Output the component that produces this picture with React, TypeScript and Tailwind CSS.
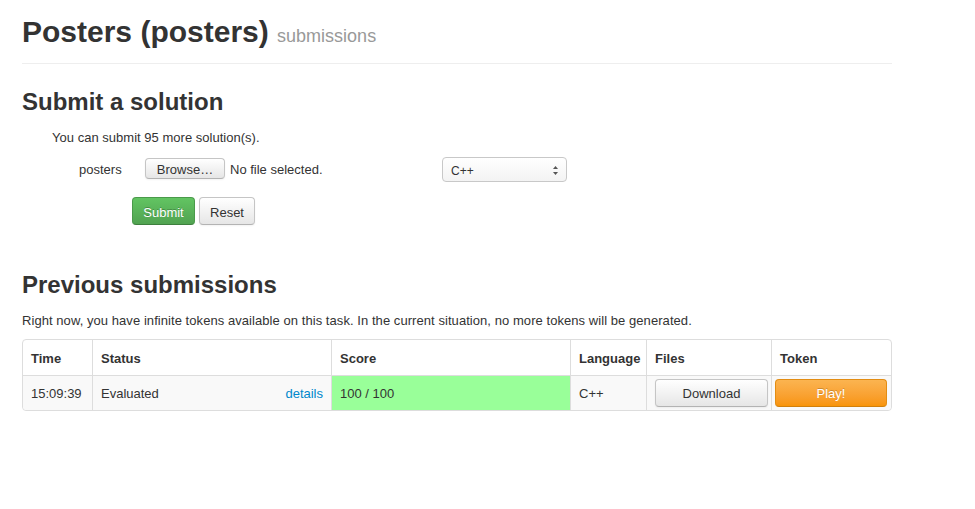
const btnDefault =
  "rounded-[4px] border border-[#c5c5c5] border-b-[#b3b3b3] bg-gradient-to-b from-white to-[#e6e6e6] text-[#333] text-[13px] shadow-[inset_0_1px_0_rgba(255,255,255,0.2),0_1px_2px_rgba(0,0,0,0.05)]";

function SelectBox() {
  return (
    <div className="flex h-[25px] w-[125px] items-center justify-between rounded-[4px] border border-[#c8c8c8] bg-gradient-to-b from-white to-[#f3f3f3] pl-[8px] pr-[7px] pt-[2px] text-[12px] text-[#333]">
      <span>C++</span>
      <svg width="7" height="11" viewBox="0 0 7 11">
        <path d="M3.5 1 L6 4 L1 4 Z" fill="#555" />
        <path d="M3.5 10 L6 7 L1 7 Z" fill="#555" />
      </svg>
    </div>
  );
}

export default function App() {
  return (
    <div className="min-h-[509px] bg-white font-['Liberation_Sans',Arial,sans-serif] text-[#333]">
      <div className="w-[870px] ml-[22px] pt-[12px]">
        {/* page header */}
        <div className="border-b border-[#eee] pb-[11px]">
          <h1 className="h-[40px] text-[30px] font-bold leading-[40px] whitespace-nowrap">
            Posters (posters){" "}
            <span className="text-[18px] font-normal text-[#999]">submissions</span>
          </h1>
        </div>

        <h2 className="mt-[23px] text-[24px] font-bold leading-[30px]">Submit a solution</h2>
        <p className="mt-[12px] pl-[30px] text-[13px] leading-[18px] tracking-[0.02px]">
          You can submit 95 more solution(s).
        </p>

        <div className="mt-[10px] flex h-[25px] items-start text-[13px]">
          <div className="ml-[57px] w-[66px] pt-[4px] leading-[18px]">posters</div>
          <div className="flex w-[297px] items-center">
            <button className={`${btnDefault} h-[21px] w-[80px] pt-px leading-[19px]`}>Browse…</button>
            <span className="ml-[5px] pt-[2px] leading-[21px]">No file selected.</span>
          </div>
          <SelectBox />
        </div>

        <div className="ml-[110px] mt-[15px] flex gap-[4px] text-[13px]">
          <button className="h-[28px] w-[63px] rounded-[4px] border border-[#4a9a4a] border-b-[#3d7f3d] bg-gradient-to-b from-[#62c462] to-[#51a351] pt-[3px] text-white [text-shadow:0_-1px_0_rgba(0,0,0,0.25)]">
            Submit
          </button>
          <button className={`${btnDefault} h-[28px] w-[56px] pt-[3px]`}>Reset</button>
        </div>

        <h2 className="mt-[45px] text-[24px] font-bold leading-[30px]">Previous submissions</h2>
        <p className="mt-[12px] text-[13px] leading-[18px] tracking-[0.06px]">
          Right now, you have infinite tokens available on this task. In the current situation, no more tokens will be generated.
        </p>

        <table className="mt-[9px] w-[870px] table-fixed border-separate border-spacing-0 rounded-[4px] border border-[#ddd] text-[13px]">
          <colgroup>
            <col className="w-[69px]" />
            <col className="w-[239px]" />
            <col className="w-[239px]" />
            <col className="w-[76px]" />
            <col className="w-[125px]" />
            <col />
          </colgroup>
          <thead>
            <tr className="h-[35px] text-left font-bold">
              <th className="px-[8px] pt-[2px] font-bold">Time</th>
              <th className="border-l border-[#ddd] px-[8px] pt-[2px] font-bold">Status</th>
              <th className="border-l border-[#ddd] px-[8px] pt-[2px] font-bold">Score</th>
              <th className="border-l border-[#ddd] px-[8px] pt-[2px] font-bold">Language</th>
              <th className="border-l border-[#ddd] px-[8px] pt-[2px] font-bold">Files</th>
              <th className="border-l border-[#ddd] px-[8px] pt-[2px] font-bold">Token</th>
            </tr>
          </thead>
          <tbody>
            <tr className="h-[34px] bg-[#f9f9f9]">
              <td className="rounded-bl-[4px] border-t border-[#ddd] px-[8px] pt-[2px]">15:09:39</td>
              <td className="border-l border-t border-[#ddd] px-[8px] pt-[2px]">
                <div className="flex justify-between">
                  <span>Evaluated</span>
                  <a className="text-[#0088cc]">details</a>
                </div>
              </td>
              <td className="border-l border-t border-[#ddd] bg-[#99ff99] px-[8px] pt-[2px]">100 / 100</td>
              <td className="border-l border-t border-[#ddd] px-[8px] pt-[2px]">C++</td>
              <td className="border-l border-t border-[#ddd] pl-[8px] py-[3px]">
                <button className={`${btnDefault} h-[28px] w-[113px] pt-[2px]`}>Download</button>
              </td>
              <td className="rounded-br-[4px] border-l border-t border-[#ddd] pl-[3px] py-[3px]">
                <button className="h-[28px] w-[112px] rounded-[4px] border border-[#e38d13] border-b-[#d07f0c] bg-gradient-to-b from-[#fbb450] to-[#f89406] pt-[2px] text-[13px] text-white [text-shadow:0_-1px_0_rgba(0,0,0,0.2)]">
                  Play!
                </button>
              </td>
            </tr>
          </tbody>
        </table>
      </div>
    </div>
  );
}
